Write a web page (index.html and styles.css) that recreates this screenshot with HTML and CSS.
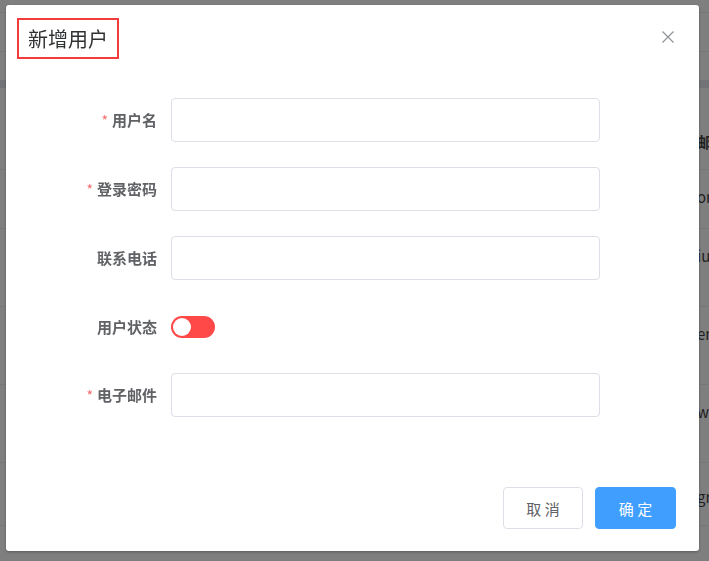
FILE: index.html
```html
<!DOCTYPE html>
<html lang="zh-CN">
<head>
<meta charset="utf-8">
<title>新增用户</title>
<link rel="stylesheet" href="styles.css">
</head>
<body>
<div class="page">
  <div class="toolbar">
    <div class="tool-line"></div>
  </div>
  <div class="band"></div>
  <div class="table">
    <div class="tr th"><span class="pad"></span><span class="cell">邮箱</span></div>
    <div class="tr r1"><span class="pad"></span><span class="cell">on</span></div>
    <div class="tr"><span class="pad"></span><span class="cell">iu</span></div>
    <div class="tr"><span class="pad"></span><span class="cell">en</span></div>
    <div class="tr"><span class="pad"></span><span class="cell">w</span></div>
    <div class="tr r5"><span class="pad"></span><span class="cell">gr</span></div>
  </div>
</div>

<div class="overlay"></div>

<div class="dialog">
  <div class="dialog-header">
    <span class="dialog-title">新增用户</span>
    <button class="close" aria-label="关闭">
      <svg width="12" height="12" viewBox="0 0 12 12"><path d="M0.5 0.5 L11.5 11.5 M11.5 0.5 L0.5 11.5" stroke="#909399" stroke-width="1.2" fill="none"/></svg>
    </button>
  </div>
  <div class="dialog-body">
    <div class="form-item">
      <label class="form-label"><span class="req">*</span>用户名</label>
      <div class="form-content"><input class="input" type="text"></div>
    </div>
    <div class="form-item">
      <label class="form-label"><span class="req">*</span>登录密码</label>
      <div class="form-content"><input class="input" type="password"></div>
    </div>
    <div class="form-item">
      <label class="form-label">联系电话</label>
      <div class="form-content"><input class="input" type="text"></div>
    </div>
    <div class="form-item switch-item">
      <label class="form-label">用户状态</label>
      <div class="form-content"><span class="switch"><span class="knob"></span></span></div>
    </div>
    <div class="form-item">
      <label class="form-label"><span class="req">*</span>电子邮件</label>
      <div class="form-content"><input class="input" type="text"></div>
    </div>
  </div>
  <div class="dialog-footer">
    <button class="btn btn-default">取 消</button>
    <button class="btn btn-primary">确 定</button>
  </div>
</div>
</body>
</html>
```
FILE: styles.css
```css
* { box-sizing: border-box; }
html, body { margin: 0; padding: 0; }
body {
  width: 709px;
  height: 561px;
  overflow: hidden;
  background: #fff;
  font-family: "Noto Sans CJK SC", "Noto Sans", sans-serif;
  color: #606266;
}

/* background page */
.page { width: 709px; overflow: hidden; }
.toolbar { height: 80px; padding-top: 12px; }
.tool-line { height: 40px; border-top: 1px solid #ebeef5; border-bottom: 1px solid #ebeef5; }
.band { height: 8px; background: #e4e7ed; }
.tr {
  display: flex;
  height: 78px;
  border-bottom: 1px solid #ebeef5;
  white-space: nowrap;
  font-size: 15px;
  line-height: 20px;
  padding-top: 17px;
  color: #444;
}
.tr.th { height: 82px; padding-top: 44px; font-weight: 700; }
.tr.r1 { height: 59px; }
.tr.r5 { height: 63px; padding-top: 24px; }
.pad { width: 697px; flex: none; }
.cell { flex: none; }

.overlay {
  position: fixed;
  inset: 0;
  background: rgba(0, 0, 0, 0.5);
}

/* dialog */
.dialog {
  position: fixed;
  left: 6px;
  top: 5px;
  width: 693px;
  height: 546px;
  background: #fff;
  border-radius: 3px;
  box-shadow: 0 1px 3px rgba(0, 0, 0, 0.3);
  display: flex;
  flex-direction: column;
}
.dialog-header {
  position: relative;
  padding: 13px 20px 0 11px;
  height: 54px;
}
.dialog-title {
  display: inline-block;
  border: 2px solid #f33b3b;
  padding: 4px 9px;
  font-size: 20px;
  line-height: 29px;
  color: #303133;
}
.close {
  position: absolute;
  top: 26px;
  right: 25px;
  width: 12px;
  height: 12px;
  padding: 0;
  border: 0;
  background: none;
  display: flex;
}

.dialog-body {
  padding: 39px 99px 0 0;
  display: flex;
  flex-direction: column;
  gap: 25px;
}
.form-item {
  display: flex;
  align-items: center;
  height: 44px;
}
.form-item.switch-item { height: 43px; }
.form-label {
  width: 165px;
  flex: none;
  padding-right: 14px;
  text-align: right;
  font-size: 15px;
  font-weight: 700;
  color: #606266;
  line-height: 44px;
}
.req {
  color: #f56c6c;
  margin-right: 4px;
  font-weight: 400;
  font-size: 14px;
}
.form-content { flex: 1; display: flex; align-items: center; }
.input {
  width: 100%;
  height: 44px;
  border: 1px solid #dcdfe6;
  border-radius: 4px;
  background: #fff;
  outline: none;
  padding: 0 15px;
  font: inherit;
}

.switch {
  position: relative;
  width: 44px;
  height: 22px;
  border-radius: 11px;
  background: #ff4949;
  display: inline-block;
}
.knob {
  position: absolute;
  left: 2px;
  top: 2px;
  width: 18px;
  height: 18px;
  border-radius: 50%;
  background: #fff;
}

.dialog-footer {
  margin-top: auto;
  padding: 0 23px 22px 0;
  display: flex;
  justify-content: flex-end;
  gap: 12px;
}
.btn {
  height: 42px;
  border-radius: 4px;
  font-family: "Noto Sans CJK SC", "Noto Sans", sans-serif;
  font-size: 15px;
  padding: 0;
  cursor: pointer;
}
.btn-default {
  width: 80px;
  background: #fff;
  border: 1px solid #dcdfe6;
  color: #606266;
}
.btn-primary {
  width: 81px;
  background: #409eff;
  border: 1px solid #409eff;
  color: #fff;
}
```
